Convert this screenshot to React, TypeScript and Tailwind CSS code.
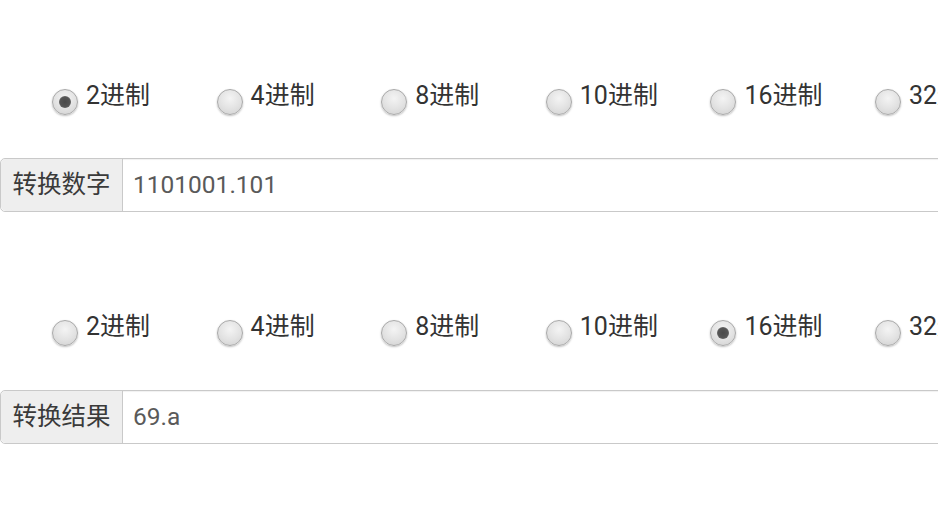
import React from "react";

const bases = ["2进制", "4进制", "8进制", "10进制", "16进制", "32进制"];

function Radio({ checked }: { checked: boolean }) {
  return (
    <span className="relative mt-[4px] flex h-[26px] w-[26px] shrink-0 items-center justify-center rounded-full border border-[#a9a9a9] bg-[radial-gradient(circle_at_50%_35%,#f4f4f4_0%,#e2e2e2_55%,#cfcfcf_100%)] shadow-[0_1px_2px_rgba(0,0,0,0.25)]">
      {checked && (
        <span className="h-[12px] w-[12px] rounded-full bg-[radial-gradient(circle,#4a4a4a_0%,#555_55%,#8a8a8a_100%)]" />
      )}
    </span>
  );
}

function RadioRow({ selected }: { selected: number }) {
  return (
    <div className="flex pl-[52px]">
      {bases.map((b, i) => (
        <div key={b} className="flex h-[30px] w-[164.6px] shrink-0 items-start gap-[8px]">
          <Radio checked={i === selected} />
          <span className="whitespace-nowrap text-[25px] leading-[22px] text-[#333]">{b}</span>
        </div>
      ))}
    </div>
  );
}

function Field({ label, value }: { label: string; value: string }) {
  return (
    <div className="flex h-[54px] w-[1100px] rounded-l-[5px] border border-[#c9c9c9] bg-white shadow-[inset_0_1px_1px_rgba(0,0,0,0.06)]">
      <div className="flex w-[122px] items-center justify-center rounded-l-[5px] border-r border-[#c9c9c9] bg-[#eeeeee] text-[24.5px] text-[#3a3a3a]">
        {label}
      </div>
      <div className="flex items-center pl-[10px] text-[24.5px] text-[#5a5a5a]">{value}</div>
    </div>
  );
}

export default function App() {
  return (
    <div
      className="h-[519px] w-[938px] overflow-hidden bg-white"
      style={{ fontFamily: 'Roboto, "Noto Sans CJK SC", sans-serif' }}
    >
      <div className="w-[1200px] pt-[85px]">
        <RadioRow selected={0} />
        <div className="mt-[43px]">
          <Field label="转换数字" value="1101001.101" />
        </div>
        <div className="mt-[104px]">
          <RadioRow selected={4} />
        </div>
        <div className="mt-[44px]">
          <Field label="转换结果" value="69.a" />
        </div>
      </div>
    </div>
  );
}
